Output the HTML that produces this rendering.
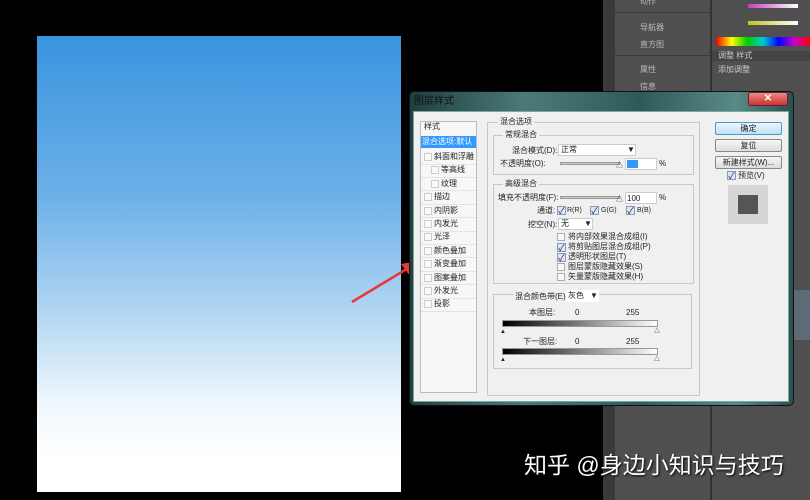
<!DOCTYPE html><html><head><meta charset="utf-8"><style>
*{margin:0;padding:0;box-sizing:border-box}
body{width:810px;height:500px;overflow:hidden;background:#000;position:relative;font-family:"Liberation Sans","Noto Sans CJK SC",sans-serif;font-size:8px;color:#222}
.a{position:absolute}
.t{position:absolute;white-space:nowrap;font-size:8px;line-height:10px}
.cb{position:absolute;width:8px;height:8px;border:1px solid #aaa;background:#fafafa}
.ck{position:absolute;width:9px;height:9px;border:1px solid #8899bb;background:#dde6f4;font-size:9px;line-height:8px;color:#224;text-align:center}
.btn{position:absolute;left:715px;width:67px;height:13px;border:1px solid #888;border-radius:2px;background:linear-gradient(#f6f6f6,#dcdcdc);text-align:center;font-size:8px;line-height:11px}
.grp{position:absolute;border:1px solid #c8c8c8}
</style></head><body>
<div class="a" style="left:603px;top:0;width:12px;height:500px;background:#3a3a3a"></div>
<div class="a" style="left:615px;top:0;width:95px;height:500px;background:#505050"></div>
<div class="a" style="left:710px;top:0;width:2px;height:500px;background:#333"></div>
<div class="a" style="left:712px;top:0;width:98px;height:500px;background:#4f4f4f"></div>
<div class="a" style="left:615px;top:12px;width:95px;height:1px;background:#3a3a3a"></div>
<div class="a" style="left:615px;top:55px;width:95px;height:1px;background:#3a3a3a"></div>
<div class="t" style="left:640px;top:-3px;color:#bbb">动作</div>
<div class="t" style="left:640px;top:23px;color:#bbb">导航器</div>
<div class="t" style="left:640px;top:40px;color:#bbb">直方图</div>
<div class="t" style="left:640px;top:65px;color:#bbb">属性</div>
<div class="t" style="left:640px;top:82px;color:#bbb">信息</div>
<div class="a" style="left:748px;top:4px;width:50px;height:4px;background:linear-gradient(90deg,#c040c0,#fff)"></div>
<div class="a" style="left:748px;top:21px;width:50px;height:4px;background:linear-gradient(90deg,#c0c020,#fff)"></div>
<div class="a" style="left:716px;top:37px;width:94px;height:9px;background:linear-gradient(90deg,#e00,#ff0,#0c0,#0cc,#00f,#c0c,#f00)"></div>
<div class="a" style="left:712px;top:51px;width:98px;height:10px;background:#444"></div>
<div class="t" style="left:718px;top:51px;color:#ccc">调整 样式</div>
<div class="t" style="left:718px;top:65px;color:#ccc">添加调整</div>
<div class="a" style="left:794px;top:290px;width:16px;height:50px;background:#5f6a78"></div>
<div class="a" style="left:37px;top:36px;width:364px;height:456px;background:linear-gradient(#3a94de 0%,#6cb0e8 35%,#b6d8f3 62%,#eef6fc 80%,#fff 92%)"></div>
<svg class="a" style="left:0;top:0" width="810" height="500"><line x1="352" y1="302" x2="410" y2="267" stroke="#e8383a" stroke-width="2.5"/><polygon points="419,261 401,264 410,276" fill="#e8383a"/></svg>
<div class="a" style="left:409px;top:91px;width:385px;height:315px;border-radius:5px;background:linear-gradient(90deg,#1f3f40,#4c7a78 30%,#2f5a5a 60%,#5a8a88 85%,#2c4e50);border:1px solid #111"></div>
<div class="t" style="left:414px;top:96px;font-size:10px;line-height:12px;color:#111">图层样式</div>
<div class="a" style="left:748px;top:92px;width:40px;height:14px;border-radius:3px;background:linear-gradient(#e88,#c33);border:1px solid #622;color:#fff;text-align:center;font-size:10px;line-height:12px;font-weight:bold">✕</div>
<div class="a" style="left:413px;top:111px;width:376px;height:291px;background:#f0f0f0;border:1px solid #7a9"></div>
<div class="a" style="left:420px;top:121px;width:57px;height:272px;background:#f7f7f7;border:1px solid #bbb"></div>
<div class="t" style="left:424px;top:122px">样式</div>
<div class="a" style="left:421px;top:136px;width:55px;height:12px;background:#3399ff"></div>
<div class="t" style="left:422px;top:137px;color:#fff">混合选项:默认</div>
<div id="list"></div>
<div class="grp" style="left:487px;top:122px;width:213px;height:274px"></div>
<div class="t" style="left:498px;top:117px;background:#f0f0f0;padding:0 2px">混合选项</div>
<div class="grp" style="left:493px;top:135px;width:201px;height:40px"></div>
<div class="t" style="left:503px;top:130px;background:#f0f0f0;padding:0 2px">常规混合</div>
<div class="t" style="left:512px;top:146px">混合模式(D):</div>
<div class="a" style="left:558px;top:144px;width:78px;height:12px;background:#fff;border:1px solid #ccc"></div>
<div class="t" style="left:561px;top:145px">正常</div><div class="t" style="left:627px;top:145px">▼</div>
<div class="t" style="left:500px;top:159px">不透明度(O):</div>
<div class="a" style="left:560px;top:162px;width:60px;height:3px;background:#ccc;border:1px solid #999"></div>
<div class="t" style="left:616px;top:161px;font-size:7px">△</div>
<div class="a" style="left:625px;top:158px;width:32px;height:12px;background:#fff;border:1px solid #ccc"></div>
<div class="a" style="left:627px;top:160px;width:11px;height:8px;background:#3399ff"></div>
<div class="t" style="left:659px;top:159px">%</div>
<div class="grp" style="left:493px;top:184px;width:201px;height:100px"></div>
<div class="t" style="left:503px;top:179px;background:#f0f0f0;padding:0 2px">高级混合</div>
<div class="t" style="left:498px;top:193px">填充不透明度(F):</div>
<div class="a" style="left:560px;top:196px;width:60px;height:3px;background:#ccc;border:1px solid #999"></div>
<div class="t" style="left:616px;top:195px;font-size:7px">△</div>
<div class="a" style="left:625px;top:192px;width:32px;height:12px;background:#fff;border:1px solid #ccc"></div>
<div class="t" style="left:627px;top:194px">100</div><div class="t" style="left:659px;top:193px">%</div>
<div class="t" style="left:537px;top:206px">通道:</div>
<div class="ck" style="left:557px;top:206px">✓</div><div class="t" style="left:567px;top:206px;font-size:7px">R(R)</div>
<div class="ck" style="left:590px;top:206px">✓</div><div class="t" style="left:601px;top:206px;font-size:7px">G(G)</div>
<div class="ck" style="left:626px;top:206px">✓</div><div class="t" style="left:637px;top:206px;font-size:7px">B(B)</div>
<div class="t" style="left:528px;top:220px">挖空(N):</div>
<div class="a" style="left:558px;top:218px;width:35px;height:12px;background:#fff;border:1px solid #ccc"></div>
<div class="t" style="left:561px;top:219px">无</div><div class="t" style="left:584px;top:219px">▼</div>
<div class="cb" style="left:557px;top:233px"></div><div class="t" style="left:568px;top:232px">将内部效果混合成组(I)</div>
<div class="ck" style="left:557px;top:243px">✓</div><div class="t" style="left:568px;top:242px">将剪贴图层混合成组(P)</div>
<div class="ck" style="left:557px;top:253px">✓</div><div class="t" style="left:568px;top:252px">透明形状图层(T)</div>
<div class="cb" style="left:557px;top:263px"></div><div class="t" style="left:568px;top:262px">图层蒙版隐藏效果(S)</div>
<div class="cb" style="left:557px;top:273px"></div><div class="t" style="left:568px;top:272px">矢量蒙版隐藏效果(H)</div>
<div class="grp" style="left:493px;top:294px;width:199px;height:75px"></div>
<div class="t" style="left:513px;top:292px;background:#f0f0f0;padding:0 2px">混合颜色带(E):</div>
<div class="a" style="left:566px;top:290px;width:33px;height:12px;background:#fff"></div>
<div class="t" style="left:568px;top:291px">灰色</div><div class="t" style="left:590px;top:291px">▼</div>
<div class="t" style="left:529px;top:308px">本图层:</div><div class="t" style="left:575px;top:308px">0</div><div class="t" style="left:626px;top:308px">255</div>
<div class="a" style="left:502px;top:320px;width:156px;height:7px;background:linear-gradient(90deg,#000,#fff);border:1px solid #999"></div>
<div class="t" style="left:500px;top:327px;font-size:6px">▲</div><div class="t" style="left:654px;top:327px;font-size:6px">△</div>
<div class="t" style="left:523px;top:337px">下一图层:</div><div class="t" style="left:575px;top:337px">0</div><div class="t" style="left:626px;top:337px">255</div>
<div class="a" style="left:502px;top:348px;width:156px;height:7px;background:linear-gradient(90deg,#000,#fff);border:1px solid #999"></div>
<div class="t" style="left:500px;top:355px;font-size:6px">▲</div><div class="t" style="left:654px;top:355px;font-size:6px">△</div>
<div class="btn" style="top:122px;border-color:#4a9ad0;background:linear-gradient(#eaf6fd,#bfe0f5)">确定</div>
<div class="btn" style="top:139px">复位</div>
<div class="btn" style="top:156px">新建样式(W)...</div>
<div class="ck" style="left:727px;top:171px">✓</div><div class="t" style="left:738px;top:171px">预览(V)</div>
<div class="a" style="left:728px;top:185px;width:40px;height:39px;background:#d6d6d6"></div>
<div class="a" style="left:738px;top:195px;width:20px;height:19px;background:#555"></div>
<div class="t" style="left:524px;top:450px;font-size:23px;line-height:30px;color:#fff;text-shadow:1px 1px 2px #000">知乎 @身边小知识与技巧</div>
<script>
var items=[["斜面和浮雕",0],["等高线",1],["纹理",1],["描边",0],["内阴影",0],["内发光",0],["光泽",0],["颜色叠加",0],["渐变叠加",0],["图案叠加",0],["外发光",0],["投影",0]];
var h="";items.forEach(function(it,i){var y=152+i*13.4;var x=it[1]?431:424;h+='<div class="cb" style="left:'+x+'px;top:'+(y+1)+'px;border-color:#ccc"></div><div class="t" style="left:'+(x+10)+'px;top:'+y+'px">'+it[0]+'</div><div class="a" style="left:421px;top:'+(y+11.5)+'px;width:55px;height:1px;background:#e4e4e4"></div>';});
document.getElementById("list").outerHTML=h;
</script>
</body></html>
